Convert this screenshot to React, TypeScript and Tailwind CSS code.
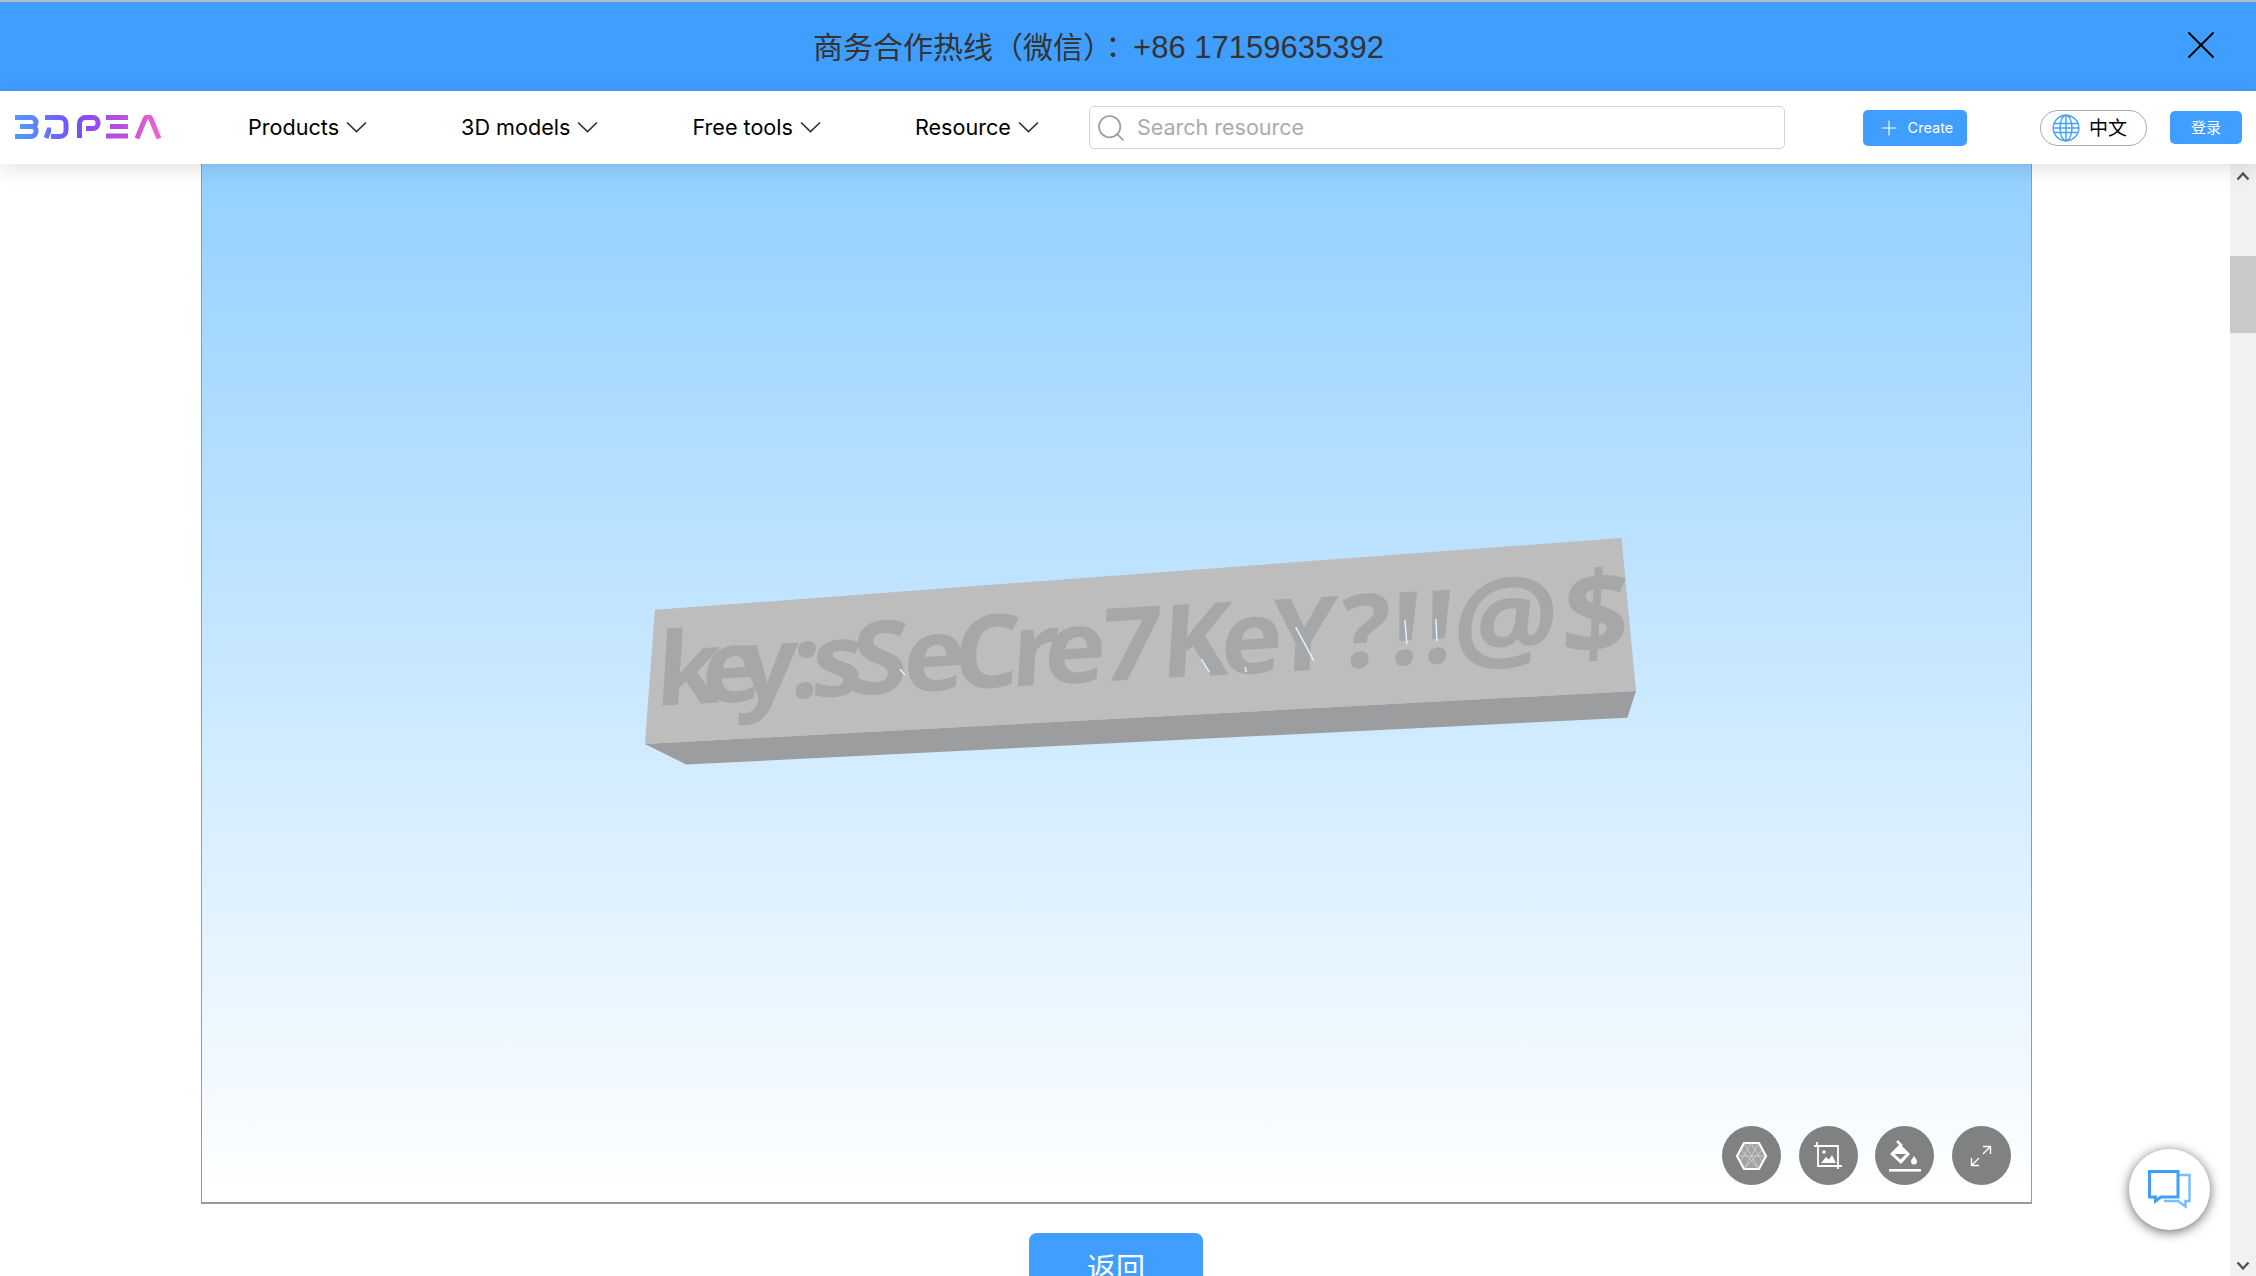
import { Plus, Search, X } from "lucide-react";

const NAV_ITEMS = ["Products", "3D models", "Free tools", "Resource"];

// x of each letter on the block, read off the reference
const KEY_X = "0 46 82 135 156 195 248 298 356 389 446 506 566 616 685 736 769 798 907";

function Logo() {
  return (
    <svg width="146" height="24" viewBox="0 0 146 24" fill="none" aria-label="3DPEA">
      <defs>
        <linearGradient id="logo" gradientUnits="userSpaceOnUse" x1="0" y1="0" x2="146" y2="0">
          <stop offset="0" stopColor="#4f9dff" />
          <stop offset="0.42" stopColor="#7a4dfb" />
          <stop offset="0.72" stopColor="#b84fdc" />
          <stop offset="1" stopColor="#f463cf" />
        </linearGradient>
      </defs>
      <g stroke="url(#logo)" strokeWidth="5">
        <path d="M0 2.500H16a5 5 0 0 1 5 5v0a4 4 0 0 1-4 4H5M17 11.500a4 4 0 0 1 4 4v1a5 5 0 0 1-5 5H0" />
        <path d="M30 2.500H45a6 6 0 0 1 6 6v7a6 6 0 0 1-6 6H36" />
        <path d="M31 23l3-8h2" />
        <path d="M64.500 23V8.500a6 6 0 0 1 6-6H78a5 5 0 0 1 5 5v1a5 5 0 0 1-5 5H71" />
        <path d="M91 2.500H113M95 11.500H113M91 21H113" />
        <path d="M122 23.500L130 4q1.500-2.500 3-2.500t3 2.500L144 23.500" />
      </g>
    </svg>
  );
}

function Chevron() {
  return (
    <svg width="21" height="12" viewBox="0 0 21 12" fill="none" stroke="#333" strokeWidth="1.700">
      <path d="M1 1.500L10.500 10.500L20 1.500" />
    </svg>
  );
}

function GlobeIcon() {
  return (
    <svg width="28" height="28" viewBox="0 0 28 28" fill="none" stroke="#409eff" strokeWidth="1.400">
      <circle cx="14" cy="14" r="12.800" />
      <ellipse cx="14" cy="14" rx="6" ry="12.800" />
      <path d="M14 1V27M2 9.500H26M1.200 14H26.800M2 18.500H26" />
    </svg>
  );
}

function MeshIcon() {
  return (
    <svg width="33" height="30" viewBox="0 0 33 30" fill="none">
      <path d="M9 2H24L31 15L24 28H9L2 15Z" fill="#a3a3a3" stroke="#fff" strokeWidth="2.200" />
      <path d="M9 2L24 28M24 2L9 28M2 15H31M5 8L24 28M28 8L9 28M16 2L28 22M16 2L5 22" stroke="#d8d8d8" strokeWidth="0.700" />
    </svg>
  );
}

function BackgroundIcon() {
  return (
    <svg width="29" height="27" viewBox="0 0 29 27" fill="none">
      <path d="M3 0V4M0 4H24V24M4 4V24H28M24 24V27" stroke="#fff" strokeWidth="1.800" />
      <circle cx="10" cy="10" r="1.800" fill="#fff" />
      <path d="M7 21L12 15L15 17.500L18 13L22 21Z" fill="#fff" />
    </svg>
  );
}

function BucketIcon() {
  return (
    <svg width="32" height="32" viewBox="0 0 32 32" fill="none">
      <path d="M8 1L13 6" stroke="#fff" strokeWidth="2.500" />
      <path d="M1 14L11 4L21 14L12 24Z" fill="#fff" />
      <path d="M5.500 14H17L11.500 19.500Z" fill="#808181" />
      <path d="M25 16c2 3 3 4 3 5.500a3 3 0 0 1-6 0c0-1.500 1-2.500 3-5.500Z" fill="#fff" />
      <rect x="0" y="29" width="32" height="2.600" fill="#fff" />
    </svg>
  );
}

function ExpandIcon() {
  return (
    <svg width="22" height="22" viewBox="0 0 22 22" fill="none" stroke="#fff" strokeWidth="1.400">
      <path d="M13 1.500H20.500V9M20.500 1.500L13 9" />
      <path d="M9 20.500H1.500V13M1.500 20.500L9 13" />
    </svg>
  );
}

function ChatIcon() {
  return (
    <svg width="44" height="39" viewBox="0 0 44 39" fill="none">
      <path d="M31 5H41.500V31H37.500V36.500L30 31H16" stroke="#7dbcff" strokeWidth="2.500" />
      <path d="M1.500 1.500H30V27H13L7.500 31V27H1.500Z" stroke="#409eff" strokeWidth="3" />
    </svg>
  );
}

function Model() {
  return (
    <svg className="block h-full w-full" viewBox="202 164 1830 1040" fill="none">
      <path d="M654.500 610.700L1623 538.700L1637.500 692L644.500 745Z" fill="#bdbdbd" />
      <path d="M644.500 745L686 765.700L1628.800 718.700L1637.500 692Z" fill="#9c9d9e" />
      <text
        transform="matrix(1 -0.055 -0.06 0.980 654 707)"
        x={KEY_X}
        y="0"
        fill="#a6a7a8"
        style={{ fontFamily: '"Open Sans", sans-serif', fontSize: "104px", fontWeight: 700 }}
      >
        key:sSeCre7KeY?!!<tspan style={{ fontSize: "118px" }}>@$</tspan>
      </text>
      <path
        d="M1296.500 628L1315 662M1406 621L1408 645M1437 620L1438 642M1202 660L1210 673M1246 668L1247 673M900 670L905 676"
        stroke="#dff1ff"
        strokeWidth="1.500"
      />
    </svg>
  );
}

export default function App() {
  return (
    <div className="relative flex h-[1276px] w-[2256px] flex-col overflow-hidden bg-white font-['Inter',sans-serif]">
      <div className="flex h-[91px] shrink-0 items-center justify-center border-t-2 border-[#b4bcc6] bg-[#409eff] pr-[59px] pt-[2px] font-['Liberation_Sans','Noto_Sans_CJK_SC',sans-serif] text-[30px] text-[#333]">
        <span>
          商务合作热线（微信）<span className="font-['Noto_Sans_CJK_TC',sans-serif]">：</span>
          <span className="ml-[5px] text-[31px]">+86 17159635392</span>
        </span>
        <X className="absolute left-[2177px] top-[21px] size-[48px] text-black" strokeWidth={1} />
      </div>

      <header className="relative z-10 flex h-[73px] shrink-0 items-center bg-white pl-[15px] shadow-[0_4px_20px_rgba(0,0,0,0.12)]">
        <div className="mb-[2px] w-[233px]">
          <Logo />
        </div>
        <nav className="flex items-center gap-[94px]">
          {NAV_ITEMS.map((item) => (
            <div key={item} className="flex items-center gap-[7px] text-[21.600px] text-black">
              <span>{item}</span>
              <Chevron />
            </div>
          ))}
        </nav>
        <div className="ml-[50px] flex h-[43px] w-[696px] items-center gap-[10px] rounded-[5px] border border-[#d3d4d9] pl-[5px]">
          <Search className="size-[32px] text-[#9a9da3]" strokeWidth={1.300} />
          <span className="text-[21.500px] text-[#a8abb2]">Search resource</span>
        </div>
        <button className="ml-[78px] flex h-[36px] w-[104px] items-center justify-center gap-[7px] rounded-[5px] bg-[#409eff] text-[14.500px] text-white">
          <Plus className="size-[24px]" strokeWidth={1.100} />
          Create
        </button>
        <div className="ml-[73px] flex h-[36px] w-[107px] items-center gap-[9px] rounded-full border border-[#a9a9a9] pl-[11px] font-['Noto_Sans_CJK_SC',sans-serif] text-[19px] text-black">
          <GlobeIcon />
          中文
        </div>
        <button className="ml-[23px] flex h-[33px] w-[72px] items-center justify-center rounded-[5px] bg-[#409eff] font-['Noto_Sans_CJK_SC',sans-serif] text-[15px] text-white">
          登录
        </button>
      </header>

      <div className="flex min-h-0 flex-1">
        <main className="flex flex-1 flex-col items-center overflow-hidden pl-[201px] pr-[199px]">
          <div className="relative h-[1040px] w-[1831px] shrink-0 border-x border-b-2 border-[#999] bg-gradient-to-b from-[#93d0ff] to-white">
            <Model />
            <div className="absolute bottom-[17px] right-[20px] flex gap-[17.500px]">
              {[<MeshIcon key="mesh" />, <BackgroundIcon key="bg" />, <BucketIcon key="bucket" />, <ExpandIcon key="expand" />].map((icon) => (
                <div key={icon.key} className="flex size-[59px] items-center justify-center rounded-full bg-[#808181]">
                  {icon}
                </div>
              ))}
            </div>
          </div>
          <button className="mt-[29px] h-[72px] w-[174px] shrink-0 rounded-[8px] bg-[#409eff] pb-[5px] font-['Noto_Sans_CJK_SC',sans-serif] text-[29px] text-white">
            返回
          </button>
        </main>

        <aside className="flex w-[26px] shrink-0 flex-col items-center bg-[#f1f1f1]">
          <svg className="mt-[7px] shrink-0" width="14" height="10" viewBox="0 0 14 10" fill="none" stroke="#555" strokeWidth="2.500">
            <path d="M1.500 8.500L7 2.500L12.500 8.500" />
          </svg>
          <div className="mt-[75px] h-[77px] w-full shrink-0 bg-[#c9c9c9]" />
          <svg className="mt-auto mb-[5px] shrink-0" width="14" height="10" viewBox="0 0 14 10" fill="none" stroke="#555" strokeWidth="2.500">
            <path d="M1.500 1.500L7 7.500L12.500 1.500" />
          </svg>
        </aside>
      </div>

      <div className="absolute left-[2129px] top-[1149px] z-20 flex size-[81px] items-center justify-center rounded-full bg-white shadow-[0_2px_12px_rgba(0,0,0,0.6)]">
        <ChatIcon />
      </div>
    </div>
  );
}
